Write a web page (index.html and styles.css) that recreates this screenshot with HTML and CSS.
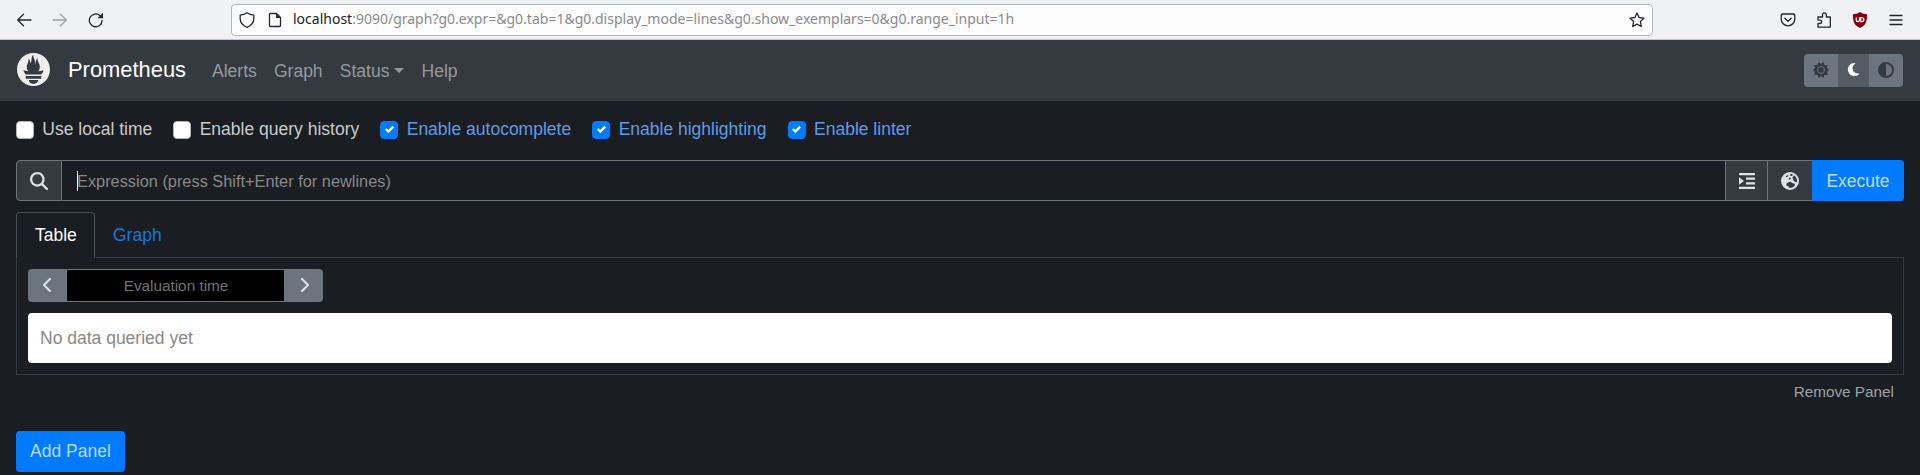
FILE: index.html
```html
<!DOCTYPE html>
<html lang="en">
<head>
<meta charset="utf-8">
<title>Prometheus</title>
<link rel="stylesheet" href="styles.css">
</head>
<body>
<header class="browser">
  <div class="history">
    <svg width="16" height="16" viewBox="0 0 16 16" class="line"><path d="M15 8H2M7.500 2.200L1.700 8l5.800 5.800"/></svg>
    <svg width="16" height="16" viewBox="0 0 16 16" class="line dim"><path d="M1 8h13M8.500 2.200L14.300 8l-5.800 5.800"/></svg>
    <svg width="16" height="16" viewBox="0 0 16 16" class="line"><path d="M14.100 8.500A6.400 6.400 0 1 1 12 3.600L13.500 5"/><path d="M15 .8v5.500H9.500z" class="solid"/></svg>
  </div>
  <div class="address">
    <svg width="16" height="16" viewBox="0 0 16 16" class="line"><path d="M8 .8C6 2.200 3.600 3 1.200 3.200v3.500c0 4 3 7 6.800 8.600 3.800-1.600 6.800-4.600 6.800-8.600V3.200C12.400 3 10 2.200 8 .8z"/></svg>
    <svg width="14" height="16" viewBox="0 0 14 16" class="line"><path d="M2.500 1.500h6l4 4v8a1 1 0 0 1-1 1h-9a1 1 0 0 1-1-1v-11a1 1 0 0 1 1-1z"/><path d="M8 1.500v4.500h4.500z" class="solid"/></svg>
    <div class="url"><span class="host">localhost</span>:9090/graph?g0.expr=&amp;g0.tab=1&amp;g0.display_mode=lines&amp;g0.show_exemplars=0&amp;g0.range_input=1h</div>
    <svg width="16" height="16" viewBox="0 0 16 16" class="line"><path d="M8 1l2.100 4.500 4.900.6-3.600 3.400.9 5L8 12.100l-4.300 2.400.9-5L1 6.100l4.900-.6z"/></svg>
  </div>
  <div class="tools">
    <svg width="16" height="16" viewBox="0 0 16 16" class="line"><path d="M2.700 2h10.600a1.500 1.500 0 0 1 1.500 1.500V7a6.800 6.800 0 0 1-13.600 0V3.500A1.500 1.500 0 0 1 2.700 2z"/><path d="M4.800 6.200L8 9.300l3.200-3.100"/></svg>
    <svg width="16" height="16" viewBox="0 0 16 16" class="line"><path d="M2 15.200V11.500h2a1.700 1.700 0 0 0 0-3.400H2V5h4.500V2.800a1.900 1.900 0 0 1 3.800 0V5h4v10.200z"/></svg>
    <svg width="16" height="16" viewBox="0 0 16 16"><path d="M8 0c2 1.500 4.500 2.200 7 2.300 0 7-.5 10.700-7 13.700-6.500-3-7-6.700-7-13.700C3.500 2.200 6 1.500 8 0z" fill="#800010"/><path d="M4.200 5.600v2.500a1.600 1.600 0 0 0 3.200 0V5.600M8.800 5.600v4h1.100a2 2 0 0 0 0-4z" fill="none" stroke="#fff" stroke-width="1.200"/></svg>
    <svg width="16" height="16" viewBox="0 0 16 16" class="line"><path d="M2 3.500h12M2 8h12M2 12.500h12"/></svg>
  </div>
</header>

<nav class="navbar">
  <svg class="logo" width="33" height="33" viewBox="0 0 24 24"><path d="M12 0C5.373 0 0 5.372 0 12c0 6.627 5.373 12 12 12s12-5.373 12-12c0-6.628-5.373-12-12-12zm0 22.460c-1.885 0-3.414-1.260-3.414-2.814h6.828c0 1.553-1.528 2.813-3.414 2.813zm5.640-3.745H6.360v-2.046h11.280v2.046zm-.04-3.098H6.391c-.037-.043-.075-.086-.111-.13-1.155-1.401-1.427-2.133-1.690-2.879-.005-.025 1.400.287 2.395.511 0 0 .513.119 1.262.255-.72-.843-1.147-1.915-1.147-3.010 0-2.406 1.845-4.508 1.180-6.207.648.053 1.340 1.367 1.387 3.422.689-.951.977-2.690.977-3.755 0-1.103.727-2.385 1.454-2.429-.648 1.069.168 1.984.894 4.256.272.854.237 2.290.447 3.201.07-1.892.395-4.652 1.595-5.605-.529 1.200.079 2.702.494 3.424.671 1.164 1.078 2.047 1.078 3.716a4.642 4.642 0 0 1-1.110 2.996c.792-.149 1.340-.283 1.340-.283l2.573-.502s-.374 1.538-1.810 3.019z"/></svg>
  <a class="brand">Prometheus</a>
  <div class="links"><a>Alerts</a><a>Graph</a><a class="dropdown">Status</a><a>Help</a></div>
  <div class="themes">
    <button><svg width="16" height="16" viewBox="0 0 16 16"><path d="M8 1.700L10.600 0l.7 3.100L14.900 3l-.9 3 2 2-2 2 .9 3-3.600-.1-.7 3.100L8 14.300 5.400 16l-.7-3.100L1.100 13 2 10 0 8l2-2-.9-3 3.600.1L5.400 0z"/><circle cx="8" cy="8" r="3.500" fill="none" stroke="#6c757d" stroke-width="1"/></svg></button>
    <button class="on"><svg width="13" height="15" viewBox="0 0 384 512"><path d="M223.500 32C100 32 0 132.300 0 256S100 480 223.500 480c60.600 0 115.500-24.200 155.800-63.400 5-4.900 6.300-12.500 3.100-18.700s-10.100-9.700-17-8.500c-9.800 1.700-19.800 2.600-30.100 2.600-96.900 0-175.500-78.800-175.500-176 0-65.800 36-123.100 89.300-153.300 6.100-3.500 9.200-10.500 7.700-17.300s-7.300-11.900-14.300-12.500c-6.300-.5-12.600-.8-19-.8z"/></svg></button>
    <button><svg width="16" height="16" viewBox="0 0 16 16"><path fill-rule="evenodd" d="M8 0a8 8 0 1 1 0 16A8 8 0 0 1 8 0zm0 2v12A6 6 0 0 0 8 2z"/></svg></button>
  </div>
</nav>

<main>
  <div class="options">
    <label><i class="box"></i>Use local time</label>
    <label><i class="box"></i>Enable query history</label>
    <label class="checked"><i class="box"><svg width="9" height="9" viewBox="0 0 8 8"><path d="M6.564.75l-3.590 3.612-1.538-1.550L0 4.260l2.974 2.990L8 2.193z"/></svg></i>Enable autocomplete</label>
    <label class="checked"><i class="box"><svg width="9" height="9" viewBox="0 0 8 8"><path d="M6.564.75l-3.590 3.612-1.538-1.550L0 4.260l2.974 2.990L8 2.193z"/></svg></i>Enable highlighting</label>
    <label class="checked"><i class="box"><svg width="9" height="9" viewBox="0 0 8 8"><path d="M6.564.75l-3.590 3.612-1.538-1.550L0 4.260l2.974 2.990L8 2.193z"/></svg></i>Enable linter</label>
  </div>

  <div class="query">
    <div class="addon search"><svg width="18" height="18" viewBox="0 0 512 512"><path d="M416 208c0 45.900-14.900 88.300-40 122.700L502.600 457.400c12.500 12.500 12.500 32.800 0 45.300s-32.800 12.500-45.300 0L330.700 376c-34.400 25.200-76.800 40-122.700 40C93.100 416 0 322.900 0 208S93.100 0 208 0S416 93.100 416 208zM208 352a144 144 0 1 0 0-288 144 144 0 1 0 0 288z"/></svg></div>
    <div class="expression"><i class="caret"></i>Expression (press Shift+Enter for newlines)</div>
    <div class="addon format"><svg width="16" height="16" viewBox="0 0 16 16"><path d="M.7 0h14.600a.7.700 0 0 1 .7.700v.8a.7.700 0 0 1-.7.700H.7a.7.700 0 0 1-.7-.7V.7A.7.700 0 0 1 .7 0zM7 4.600h9v2.200H7zM7 9.200h9v2.200H7zM0 13.800h16V16H0zM0 4.200L5 8 0 11.800z"/></svg></div>
    <div class="addon metrics"><svg width="18" height="18" viewBox="0 0 18 18"><path fill-rule="evenodd" d="M9 0a9 9 0 1 1 0 18A9 9 0 0 1 9 0zM6.200 3L4.600 4.700l1.200.6L7.500 4zM9.500 1.800L8.700 3.500l2.300.4L12 2.400zM9 5.500L7.200 7l1.300.8L10.200 6.500zM13 3.300L11.500 5.500l.6 2.600 2 1.900 1.800.3A7.200 7.200 0 0 0 13 3.300zM8.500 9.800L5.700 11.200l-.4 2.300 2.200.8.5 1.700 3.500-.4 2.500-2-.6-2-2.600-.6-.8-1.300z"/></svg></div>
    <button class="execute">Execute</button>
  </div>

  <div class="tabs"><a class="tab active">Table</a><a class="tab">Graph</a></div>
  <section class="pane">
    <div class="time">
      <button><svg width="10" height="16" viewBox="0 0 320 512"><path d="M9.400 233.400c-12.500 12.500-12.500 32.800 0 45.300l192 192c12.500 12.500 32.800 12.500 45.300 0s12.500-32.800 0-45.300L77.300 256 246.600 86.600c12.500-12.500 12.500-32.800 0-45.300s-32.800-12.500-45.300 0z"/></svg></button>
      <div class="evaluation">Evaluation time</div>
      <button><svg width="10" height="16" viewBox="0 0 320 512"><path d="M310.600 233.400c12.500 12.500 12.500 32.800 0 45.300l-192 192c-12.500 12.500-32.800 12.500-45.300 0s-12.500-32.800 0-45.300L242.700 256 73.400 86.600c-12.500-12.500-12.500-32.800 0-45.300s32.800-12.500 45.300 0z"/></svg></button>
    </div>
    <div class="alert">No data queried yet</div>
  </section>
  <div class="remove">Remove Panel</div>
  <button class="add">Add Panel</button>
</main>
</body>
</html>
```
FILE: styles.css
```css
* { box-sizing: border-box; }
body {
  margin: 0;
  height: 475px;
  overflow: hidden;
  background: #1a1d21;
  color: #c9cbcc;
  font: 17.500px/26px "Liberation Sans", Arial, sans-serif;
}
svg { display: block; flex: none; fill: currentColor; }
button { border: 0; padding: 0; font: inherit; display: flex; align-items: center; justify-content: center; }

/* Browser toolbar */
.browser {
  height: 40px;
  display: flex;
  align-items: center;
  background: #f0f1f3;
  border-bottom: 1px solid #c4c8ca;
  color: #25252d;
}
.line { fill: none; stroke: currentColor; stroke-width: 1.300; stroke-linecap: round; stroke-linejoin: round; }
.solid { fill: currentColor; stroke: none; }
.dim { opacity: .4; }
.history { width: 231px; padding-left: 16px; display: flex; gap: 20px; }
.address {
  width: 1422px;
  height: 32px;
  display: flex;
  align-items: center;
  padding: 0 7px;
  background: #fcfcfd;
  border: 1px solid #b5b9bc;
  border-radius: 4px;
}
.address svg + svg { margin-left: 13px; }
.url { flex: 1; margin-left: 11px; padding-bottom: 2px; font: 14px/20px "Noto Sans", sans-serif; color: #8b8b8d; }
.host { color: #222226; }
.tools { display: flex; gap: 20px; margin-left: 127px; }

/* Navigation bar */
.navbar { height: 61px; padding: 0 17px; display: flex; align-items: center; background: #343a40; }
.logo { color: #eee; margin-bottom: 2px; }
.brand { margin-left: 18px; padding-bottom: 1px; font-size: 21.900px; color: #fff; }
.links { display: flex; gap: 17.200px; margin-left: 26px; color: #96999c; }
.dropdown::after {
  content: "";
  display: inline-block;
  margin-left: 5px;
  vertical-align: 4px;
  border: 5px solid transparent;
  border-top-color: currentColor;
  border-bottom: 0;
}
.themes { display: flex; margin-left: auto; border-radius: 4px; overflow: hidden; }
.themes button { width: 34px; height: 33px; padding-bottom: 2px; background: #6c757d; color: #343a40; }
.themes .on { width: 31px; background: #545b62; color: #fff; }

/* Query options */
main { padding: 15px 16px 0; }
.options { display: flex; gap: 21.200px; height: 26px; align-items: center; }
.options label { display: flex; align-items: center; }
.box {
  width: 18px;
  height: 18px;
  margin: 1px 8.300px 0 0;
  display: flex;
  align-items: center;
  justify-content: center;
  background: #fff;
  border: 1px solid #adb5bd;
  border-radius: 4px;
}
.checked { color: #5f9be6; }
.checked .box { background: #007bff; border-color: #007bff; color: #fff; }

/* Expression input */
.query { display: flex; height: 41px; margin-top: 18px; }
.addon { display: flex; align-items: center; justify-content: center; background: #343a40; border: 1px solid #6c757d; color: #dee2e6; }
.search { width: 46px; border-radius: 4px 0 0 4px; }
.expression {
  flex: 1;
  display: flex;
  align-items: center;
  padding-left: 15px;
  border: solid #6c757d;
  border-width: 1px 0;
  color: #888;
  font-size: 16.350px;
}
.caret { width: 1px; height: 20px; margin-right: -1px; background: #fff; }
.format { width: 42px; border-right: 0; }
.metrics { width: 45px; border-right: 0; }
.execute { width: 92px; background: #007bff; color: #c4dcf6; border-radius: 0 4px 4px 0; }

/* Result tabs */
.tabs { display: flex; margin-top: 11px; height: 46px; border-bottom: 1px solid #343a40; }
.tab { height: 46px; padding: 9px 17px; color: #1779dc; border: 1px solid transparent; }
.active { width: 79px; padding-left: 18px; color: #fff; background: #1a1d21; border-color: #495057; border-bottom-color: #1a1d21; border-radius: 4px 4px 0 0; }
.pane { height: 117px; padding: 11px; border: 1px solid #343a40; border-top: 0; }
.time { display: flex; width: 295px; height: 33px; border-radius: 4px; overflow: hidden; }
.time button { width: 39px; padding-bottom: 2px; background: #6c757d; color: #dee2e6; }
.evaluation { flex: 1; padding-left: 1px; background: #000; border: solid #6c757d; border-width: 1px 0; font-size: 15.300px; line-height: 32px; text-align: center; color: #6f7275; }
.alert { height: 50px; margin-top: 11px; padding: 12px; background: #fff; border-radius: 4px; color: #888; }
.remove { height: 56px; padding: 4px 10px; text-align: right; font-size: 15.300px; color: #9fa2a5; }
.add { width: 109px; height: 41px; padding-bottom: 2px; background: #007bff; color: #b9dcff; border-radius: 4px; }
```
